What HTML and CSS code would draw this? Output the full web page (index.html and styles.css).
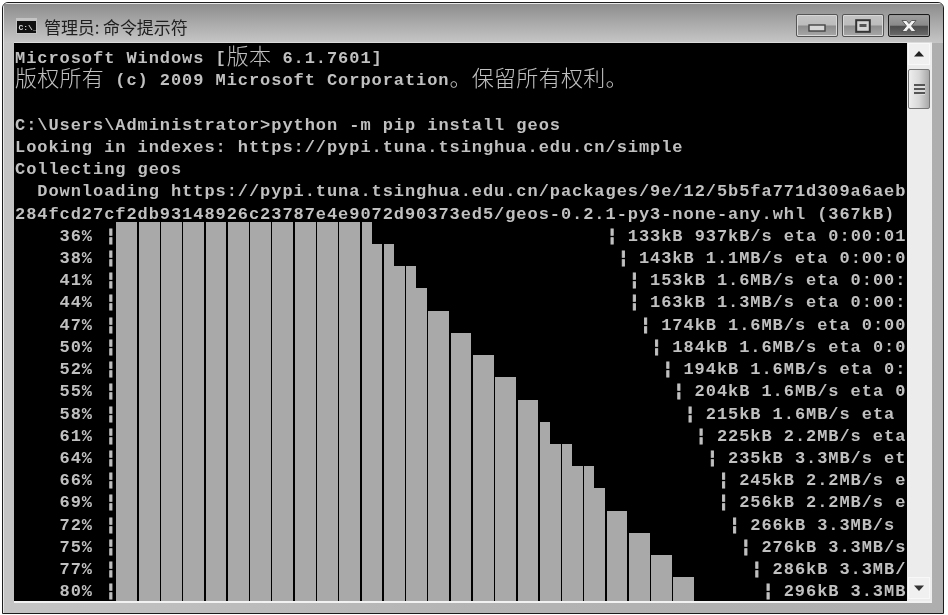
FILE: index.html
```html
<!DOCTYPE html>
<html lang="zh-CN">
<head>
<meta charset="utf-8">
<title>管理员: 命令提示符</title>
<link rel="stylesheet" href="styles.css">
</head>
<body>
<div class="window">
  <header class="titlebar">
    <svg class="app-icon" width="21" height="16" viewBox="0 0 21 16">
      <rect width="21" height="16" fill="#c4c4c4"/>
      <rect x="1" y="3" width="19" height="12" fill="#111"/>
      <text x="2.5" y="12" class="app-icon-text">C:\_</text>
    </svg>
    <span class="title">管理员: 命令提示符</span>
    <div class="controls">
      <div class="btn btn-min">
        <svg width="18" height="8" viewBox="0 0 18 8"><rect x="1" y="1" width="16" height="6" fill="#d8d8d8" stroke="#444" stroke-width="1.4"/></svg>
      </div>
      <div class="btn btn-max">
        <svg width="16" height="14" viewBox="0 0 16 14"><rect x="1.2" y="1.2" width="13.6" height="11.6" fill="#d4d4d4" stroke="#333" stroke-width="2"/><rect x="4.5" y="5" width="7" height="3" fill="#555"/></svg>
      </div>
      <div class="btn btn-close">
        <svg width="18" height="14" viewBox="0 0 18 14"><path d="M2 1.5H6.5L9 4.6L11.5 1.5H16L11.5 7L16 12.5H11.5L9 9.4L6.5 12.5H2L6.5 7Z" fill="#f2f2f2" stroke="#444" stroke-width=".8"/></svg>
      </div>
    </div>
  </header>
  <div class="client">
    <main class="console">
      <div class="row"><span>Microsoft Windows [<span class="cjk">版本</span> 6.1.7601]</span></div>
      <div class="row"><span><span class="cjk">版权所有</span> (c) 2009 Microsoft Corporation<span class="cjk">。保留所有权利。</span></span></div>
      <div class="row"> </div>
      <div class="row">C:\Users\Administrator&gt;python -m pip install geos</div>
      <div class="row">Looking in indexes: https://pypi.tuna.tsinghua.edu.cn/simple</div>
      <div class="row">Collecting geos</div>
      <div class="row">  Downloading https://pypi.tuna.tsinghua.edu.cn/packages/9e/12/5b5fa771d309a6aeb</div>
      <div class="row">284fcd27cf2db93148926c23787e4e9072d90373ed5/geos-0.2.1-py3-none-any.whl (367kB)</div>
      <div class="row"><span>    36% <b class="pipe">¦</b></span><i class="bar" style="--n:23"></i><span>                     <b class="pipe">¦</b> 133kB 937kB/s eta 0:00:01</span></div>
      <div class="row"><span>    38% <b class="pipe">¦</b></span><i class="bar" style="--n:25"></i><span>                    <b class="pipe">¦</b> 143kB 1.1MB/s eta 0:00:0</span></div>
      <div class="row"><span>    41% <b class="pipe">¦</b></span><i class="bar" style="--n:27"></i><span>                   <b class="pipe">¦</b> 153kB 1.6MB/s eta 0:00:</span></div>
      <div class="row"><span>    44% <b class="pipe">¦</b></span><i class="bar" style="--n:28"></i><span>                  <b class="pipe">¦</b> 163kB 1.3MB/s eta 0:00:</span></div>
      <div class="row"><span>    47% <b class="pipe">¦</b></span><i class="bar" style="--n:30"></i><span>                 <b class="pipe">¦</b> 174kB 1.6MB/s eta 0:00</span></div>
      <div class="row"><span>    50% <b class="pipe">¦</b></span><i class="bar" style="--n:32"></i><span>                <b class="pipe">¦</b> 184kB 1.6MB/s eta 0:0</span></div>
      <div class="row"><span>    52% <b class="pipe">¦</b></span><i class="bar" style="--n:34"></i><span>               <b class="pipe">¦</b> 194kB 1.6MB/s eta 0:</span></div>
      <div class="row"><span>    55% <b class="pipe">¦</b></span><i class="bar" style="--n:36"></i><span>              <b class="pipe">¦</b> 204kB 1.6MB/s eta 0</span></div>
      <div class="row"><span>    58% <b class="pipe">¦</b></span><i class="bar" style="--n:38"></i><span>             <b class="pipe">¦</b> 215kB 1.6MB/s eta</span></div>
      <div class="row"><span>    61% <b class="pipe">¦</b></span><i class="bar" style="--n:39"></i><span>             <b class="pipe">¦</b> 225kB 2.2MB/s eta</span></div>
      <div class="row"><span>    64% <b class="pipe">¦</b></span><i class="bar" style="--n:41"></i><span>            <b class="pipe">¦</b> 235kB 3.3MB/s et</span></div>
      <div class="row"><span>    66% <b class="pipe">¦</b></span><i class="bar" style="--n:43"></i><span>           <b class="pipe">¦</b> 245kB 2.2MB/s e</span></div>
      <div class="row"><span>    69% <b class="pipe">¦</b></span><i class="bar" style="--n:44"></i><span>          <b class="pipe">¦</b> 256kB 2.2MB/s e</span></div>
      <div class="row"><span>    72% <b class="pipe">¦</b></span><i class="bar" style="--n:46"></i><span>         <b class="pipe">¦</b> 266kB 3.3MB/s</span></div>
      <div class="row"><span>    75% <b class="pipe">¦</b></span><i class="bar" style="--n:48"></i><span>        <b class="pipe">¦</b> 276kB 3.3MB/s</span></div>
      <div class="row"><span>    77% <b class="pipe">¦</b></span><i class="bar" style="--n:50"></i><span>       <b class="pipe">¦</b> 286kB 3.3MB/</span></div>
      <div class="row"><span>    80% <b class="pipe">¦</b></span><i class="bar" style="--n:52"></i><span>      <b class="pipe">¦</b> 296kB 3.3MB</span></div>
    </main>
    <aside class="scrollbar">
      <div class="arrow"><svg width="12" height="6" viewBox="0 0 12 6"><path d="M6 0L11 5.5H1Z" fill="#222"/></svg></div>
      <div class="thumb"><span class="grip"></span></div>
      <div class="track"></div>
      <div class="arrow"><svg width="12" height="6" viewBox="0 0 12 6"><path d="M1 .5H11L6 6Z" fill="#333"/></svg></div>
    </aside>
  </div>
</div>
</body>
</html>
```
FILE: styles.css
```css
* { box-sizing: border-box; }
html, body { margin: 0; padding: 0; background: #fff; }
body { width: 948px; height: 615px; padding: 2px 0 0 2px; overflow: hidden; }

.window {
  --cell: 11.14px;
  width: 942px;
  height: 612px;
  border: 1px solid #1c1c1c;
  border-radius: 6px 6px 0 0;
  box-shadow: inset 1px 1px 0 #e8e8e8;
  background: linear-gradient(90deg, #c4c4c4, #b4b4b4 50%, #aeaeae);
  padding: 0 11px 10px 11px;
  display: flex;
  flex-direction: column;
  overflow: hidden;
  filter: grayscale(1) blur(.3px);
}

.titlebar {
  height: 40px;
  margin: 0 -11px;
  padding: 0 13px 0 13px;
  flex: none;
  display: flex;
  align-items: flex-start;
  background: linear-gradient(180deg, #8c8c8c 0, #a4a4a4 40%, #c6c6c6 100%);
  box-shadow: inset 1px 1px 0 #e8e8e8;
}
.app-icon { margin: 15px 0 0 0; flex: none; }
.app-icon-text { font: bold 8px "Liberation Mono", monospace; fill: #ddd; }
.title {
  margin: 13px 0 0 7px;
  font: 17px/22px "Noto Sans CJK SC", "Liberation Sans", sans-serif;
  color: #1f1f1f;
  letter-spacing: -.1px;
}
.controls { margin: 11px 0 0 auto; display: flex; gap: 4px; }
.btn {
  width: 42px;
  height: 23px;
  border: 1px solid #555;
  border-radius: 2px;
  display: flex;
  align-items: center;
  justify-content: center;
  box-shadow: inset 0 0 0 1px #d8d8d8;
  background: linear-gradient(180deg, #c4c4c4 0, #bcbcbc 48%, #8c8c8c 52%, #a8a8a8 100%);
}
.btn-min svg { margin-top: 5px; }
.btn-close {
  border-color: #1a1a1a;
  box-shadow: inset 0 0 0 1px #9a9a9a;
  background: linear-gradient(180deg, #a0a0a0 0, #8a8a8a 48%, #4c4c4c 55%, #6c6c6c 100%);
}

.client {
  flex: none;
  height: 560px;
  display: flex;
  border-bottom: 2px solid #f2f2f2;
  border-right: 1px solid #eee;
  box-shadow: 0 -1px 0 #dcdcdc;
}

.console {
  width: 893px;
  height: 558px;
  flex: none;
  padding: 1px 0 0 1px;
  background: #000;
  color: #c0c0c0;
  font: bold 17px/30px "Liberation Mono", monospace;
  letter-spacing: .94px;
  overflow: hidden;
}
.row {
  display: flex;
  height: 22.23px;
  white-space: pre;
}
.row:last-child { height: 24px; }
.cjk {
  font-family: "Noto Sans CJK SC", sans-serif;
  font-weight: 300;
  font-size: 22px;
  letter-spacing: .28px;
  color: #c0c0c0;
  line-height: 0;
  vertical-align: -1px;
}
.pipe {
  display: inline-block;
  transform: translateX(1.5px);
  -webkit-text-stroke: .9px #c0c0c0;
}
.row .bar {
  display: block;
  flex: none;
  width: calc(var(--n) * var(--cell));
  background: repeating-linear-gradient(90deg, #000 0 1.5px, #a9a9a9 1.5px 22.28px);
}

.scrollbar {
  width: 24px;
  flex: none;
  display: flex;
  flex-direction: column;
  padding: 0 1px 2px 1px;
  background: #ececec;
}
.arrow {
  height: 22px;
  flex: none;
  display: flex;
  align-items: center;
  justify-content: center;
  background: #f0f0f0;
  box-shadow: inset 0 0 0 1px #f8f8f8;
}
.thumb {
  height: 40px;
  margin-top: 4px;
  flex: none;
  border: 1px solid #777;
  border-radius: 2px;
  display: flex;
  align-items: center;
  justify-content: center;
  background: linear-gradient(90deg, #eee, #d8d8d8 50%, #a8a8a8);
}
.grip {
  width: 11px;
  height: 11px;
  background: repeating-linear-gradient(180deg, #555 0 2px, #ddd 2px 4px);
}
.track { flex: 1; }
```
